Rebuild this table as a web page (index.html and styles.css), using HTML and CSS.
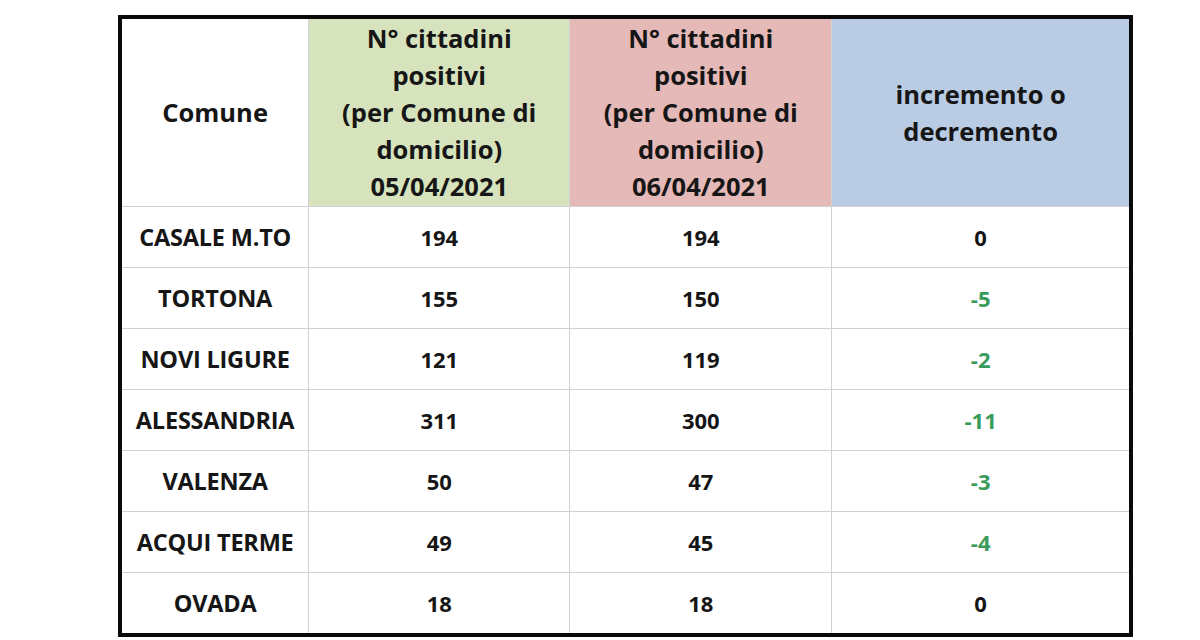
FILE: index.html
```html
<!DOCTYPE html>
<html lang="it">
<head>
<meta charset="utf-8">
<title>Positivi per Comune</title>
<link rel="stylesheet" href="styles.css">
</head>
<body>
<table class="tab">
  <colgroup>
    <col class="c1"><col class="c2"><col class="c3"><col class="c4">
  </colgroup>
  <thead>
    <tr class="head">
      <th class="h-comune">Comune</th>
      <th class="h-green">N° cittadini<br>positivi<br>(per Comune di<br>domicilio)<br>05/04/2021</th>
      <th class="h-pink">N° cittadini<br>positivi<br>(per Comune di<br>domicilio)<br>06/04/2021</th>
      <th class="h-blue">incremento o<br>decremento</th>
    </tr>
  </thead>
  <tbody>
    <tr><td class="name">CASALE M.TO</td><td>194</td><td>194</td><td>0</td></tr>
    <tr><td class="name">TORTONA</td><td>155</td><td>150</td><td class="neg">-5</td></tr>
    <tr><td class="name">NOVI LIGURE</td><td>121</td><td>119</td><td class="neg">-2</td></tr>
    <tr><td class="name">ALESSANDRIA</td><td>311</td><td>300</td><td class="neg">-11</td></tr>
    <tr><td class="name">VALENZA</td><td>50</td><td>47</td><td class="neg">-3</td></tr>
    <tr><td class="name">ACQUI TERME</td><td>49</td><td>45</td><td class="neg">-4</td></tr>
    <tr><td class="name">OVADA</td><td>18</td><td>18</td><td>0</td></tr>
  </tbody>
</table>
</body>
</html>
```
FILE: styles.css
```css
html, body {
  margin: 0;
  padding: 0;
  background: #ffffff;
}
body {
  font-family: "Open Sans", Lato, "Liberation Sans", sans-serif;
  color: #161616;
  padding: 15px 0 0 118px;
}
.tab {
  border-collapse: collapse;
  border: 4px solid #0a0a0a;
  table-layout: fixed;
  width: 1015px;
}
.c1 { width: 188px; }
.c2 { width: 260px; }
.c3 { width: 261px; }
.c4 { width: 298px; }
.tab th, .tab td {
  border: 1px solid #d2d2d2;
  text-align: center;
  vertical-align: middle;
  font-weight: 700;
  padding: 0;
}
.head th {
  height: 187px;
  font-size: 25.5px;
  line-height: 37px;
}
.h-comune { background: #ffffff; }
.h-green { background: #d7e3bd; }
.h-pink { background: #e5b9b8; }
.h-blue { background: #b9cce3; }
.tab td {
  height: 60px;
  font-size: 22px;
}
.tab td.name {
  font-size: 23.5px;
  letter-spacing: -0.2px;
}
.tab td.neg { color: #3a9c5c; }
```
